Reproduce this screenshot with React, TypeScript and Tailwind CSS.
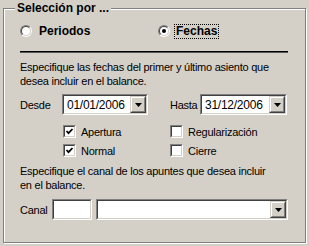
import React from 'react';

function Sunken({ className = '', children }: { className?: string; children?: React.ReactNode }) {
  return (
    <div className={`border border-t-[#808080] border-l-[#808080] border-b-white border-r-white ${className}`}>
      <div className="h-full w-full border border-t-[#404040] border-l-[#404040] border-b-[#d4d0c8] border-r-[#d4d0c8] bg-white flex items-center">
        {children}
      </div>
    </div>
  );
}

function DropButton() {
  return (
    <div className="h-full w-[16px] border border-t-[#d4d0c8] border-l-[#d4d0c8] border-b-[#404040] border-r-[#404040]">
      <div className="h-full w-full border border-t-white border-l-white border-b-[#808080] border-r-[#808080] bg-[#d4d0c8] flex items-center justify-center">
        <svg width="7" height="4" viewBox="0 0 7 4">
          <polygon points="0,0 7,0 3.5,4" fill="#000" />
        </svg>
      </div>
    </div>
  );
}

function Combo({ value, className = '' }: { value: string; className?: string }) {
  return (
    <Sunken className={`h-[21px] ${className}`}>
      <span className="flex-1 pl-[3px] text-[12px] leading-none">{value}</span>
      <DropButton />
    </Sunken>
  );
}

function Radio({ checked }: { checked?: boolean }) {
  return (
    <div className="w-[12px] h-[12px] rounded-full border border-t-[#808080] border-l-[#808080] border-b-white border-r-white">
      <div className="w-full h-full rounded-full border border-t-[#404040] border-l-[#404040] border-b-[#d4d0c8] border-r-[#d4d0c8] bg-white flex items-center justify-center">
        {checked && <div className="w-[4px] h-[4px] rounded-full bg-black" />}
      </div>
    </div>
  );
}

function Check({ checked, label }: { checked?: boolean; label: string }) {
  return (
    <div className="flex items-center h-[13px] gap-[5px]">
      <Sunken className="w-[13px] h-[13px]">
        {checked && (
          <svg width="9" height="9" viewBox="0 0 9 9" className="mx-auto">
            <polyline points="1.5,4 3.5,6.2 7.5,2" fill="none" stroke="#000" strokeWidth="1.8" />
          </svg>
        )}
      </Sunken>
      <span>{label}</span>
    </div>
  );
}

export default function App() {
  return (
    <div className="w-[309px] h-[246px] bg-[#d4d0c8] font-['Liberation_Sans',Arial,sans-serif] text-black text-[11px] tracking-[-0.25px] leading-[14px] pt-[8px] pl-[3px]">
      <div className="relative w-[303px] h-[235px] border border-[#808080] shadow-[inset_1px_1px_0_#fff,1px_1px_0_#fff] pl-[16px] pt-[14px]">
        {/* legend over the border */}
        <div className="absolute left-[11px] top-[-8px] px-[2px] bg-[#d4d0c8] text-[12px] font-bold tracking-normal">
          Selección por ...
        </div>

        <div className="flex items-center h-[16px] text-[12px] font-bold tracking-normal">
          <div className="w-[138px] flex items-center gap-[7px]">
            <Radio />
            <span>Periodos</span>
          </div>
          <div className="flex items-center gap-[4px]">
            <Radio checked />
            <span className="border border-dotted border-black px-[1px] leading-[13px]">Fechas</span>
          </div>
        </div>
        <div className="mt-[12px] h-[2px] w-[268px] border-t border-black bg-[#555]" />

        <p className="mt-[7px]">
          Especifique las fechas del primer y último asiento que
          <br />
          desea incluir en el balance.
        </p>

        <div className="mt-[6px] flex items-center h-[21px]">
          <span className="w-[42px]">Desde</span>
          <Combo value="01/01/2006" className="w-[86px]" />
          <span className="ml-[22px] w-[30px]">Hasta</span>
          <Combo value="31/12/2006" className="w-[87px]" />
        </div>

        <div className="mt-[10px] pl-[43px] grid grid-cols-[107px_1fr] gap-y-[6px]">
          <Check checked label="Apertura" />
          <Check label="Regularización" />
          <Check checked label="Normal" />
          <Check label="Cierre" />
        </div>

        <p className="mt-[7px]">
          Especifique el canal de los apuntes que desea incluir
          <br />
          en el balance.
        </p>

        <div className="mt-[7px] flex items-center h-[21px]">
          <span className="w-[32px]">Canal</span>
          <Sunken className="w-[40px] h-[21px]" />
          <Combo value="" className="ml-[4px] w-[192px]" />
        </div>
      </div>
    </div>
  );
}
